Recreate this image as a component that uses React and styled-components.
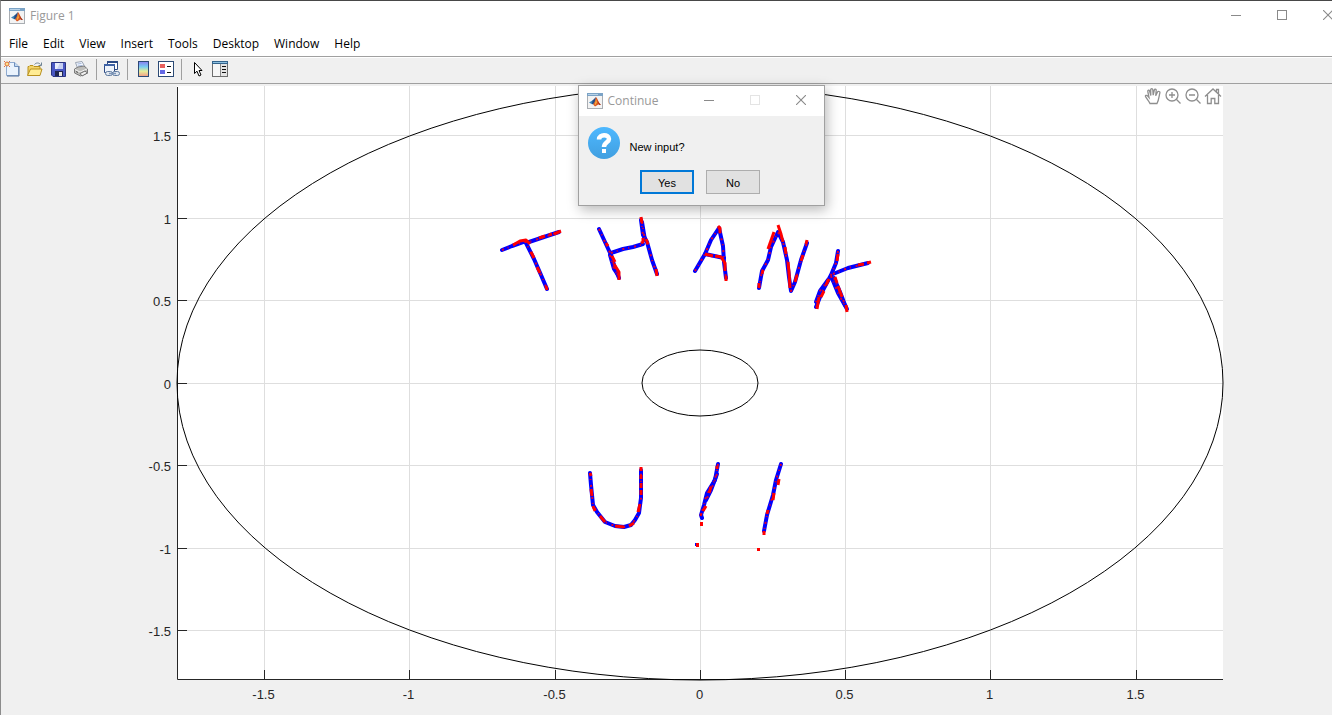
import React from 'react';
import styled, { createGlobalStyle } from 'styled-components';

const GlobalStyle = createGlobalStyle`
  *, *::before, *::after { box-sizing: border-box; }
  html, body { margin: 0; background: #f0f0f0; }
  html { overflow: hidden; }
  button { font: inherit; color: inherit; background: none; border: 0; padding: 0; margin: 0; }
  svg { display: block; }
`;

const Window = styled.div`
  position: relative;
  min-height: 100vh;
  overflow: hidden;
  border-top: 1px solid #484848;
  border-left: 1px solid #8c8c8c;
  font-family: "Open Sans", "Noto Sans", sans-serif;
  font-size: 12px;
  color: #000;
  background: #f0f0f0;
`;

const TitleBar = styled.header`
  display: flex;
  align-items: center;
  height: ${(p) => (p.$dialog ? '30px' : '29px')};
  padding-left: 8px;
  background: #fff;
  color: #999;
`;

const Title = styled.span`
  flex: 1;
  margin-left: 5px;
  line-height: 16px;
  white-space: nowrap;
`;

const Controls = styled.div`
  display: flex;
  align-self: flex-start;
  margin-right: ${(p) => (p.$clipped ? '-19px' : '0')};
`;

const ControlButton = styled.button`
  display: flex;
  align-items: center;
  justify-content: center;
  width: 46px;
  height: 28px;
  color: ${(p) => (p.disabled ? '#e4e4e4' : '#8a8a8a')};
`;

const MenuBar = styled.nav`
  display: flex;
  gap: 1px;
  height: 26px;
  padding-left: 1px;
  background: #fff;
`;

const MenuItem = styled.button`
  padding: 2px 7px 0;
  line-height: 24px;
`;

const ToolBar = styled.div`
  display: flex;
  align-items: center;
  height: 28px;
  padding-bottom: 2px;
  border-top: 1px solid #a0a0a0;
  border-bottom: 1px solid #a0a0a0;
  box-shadow: inset 0 1px 0 #fff;
  background: #f0f0f0;
`;

const ToolButton = styled.button`
  display: flex;
  width: 23px;
  padding-left: 3px;
`;

const Separator = styled.span`
  width: 1px;
  height: 21px;
  margin: 0 4px 0 3px;
  background: #a0a0a0;
`;

const Figure = styled.main`
  position: relative;
`;

const Chart = styled.svg`
  width: 100%;
  height: auto;
  font-family: "Liberation Sans", Arial, sans-serif;
  font-size: 13px;
`;

const AxesTools = styled.div`
  position: absolute;
  top: 3px;
  right: 109px;
  display: flex;
`;

const AxesButton = styled.button`
  display: flex;
  justify-content: center;
  width: 20px;
  color: #8e8e8e;
`;

const Dialog = styled.section`
  position: absolute;
  top: 1px;
  left: calc(50% - 89px);
  width: 247px;
  border: 1px solid #a0a0a0;
  background: #f0f0f0;
  box-shadow: 2px 4px 12px rgba(0, 0, 0, 0.28);
`;

const DialogBody = styled.div`
  display: flex;
  align-items: center;
  padding: 11px 9px;
  gap: 10px;
  font: 11px/16px "Liberation Sans", Arial, sans-serif;
`;

const Message = styled.p`
  margin: 8px 0 0;
`;

const DialogActions = styled.div`
  display: flex;
  justify-content: center;
  gap: 12px;
  padding: 0 2px 11px 0;
  font: 11px/16px "Liberation Sans", Arial, sans-serif;
`;

const PushButton = styled.button`
  width: 54px;
  height: 24px;
  padding-top: 2px;
  border: ${(p) => (p.$primary ? '2px solid #0078d7' : '1px solid #adadad')};
  background: #e1e1e1;
`;

const MatlabIcon = () => (
  <svg width="16" height="16" viewBox="0 0 16 16" aria-hidden="true">
    <rect x="0.5" y="0.5" width="15" height="15" fill="#f3f3f3" stroke="#a9adb2" />
    <path d="M0 0h16v3H0z" fill="#7ba3c6" />
    <path d="M1 1h10v1H1z" fill="#b9d3e8" />
    <path d="M2 9.5 5.5 7.5 8 9 5.5 11.5z" fill="#3c83b8" />
    <path d="M5.5 7.5 9 4 8.5 8 6.5 11 5 11z" fill="#234b84" />
    <path d="M9 4c1.600 1.500 2.500 5.500 5 8-1.500-.4-2.500-.6-3.500 0L8 13.500 6 11.200c1.500-.7 2.300-4 3-7.200z" fill="#d9541e" />
    <path d="M9.200 6 10 9.500 8.500 12 7.500 11.500z" fill="#f3a53b" />
    <path d="M10 6c1 2.500 2 4.500 4 6l-2-.3z" fill="#8e2418" />
  </svg>
);

const MinimizeIcon = () => (
  <svg width="10" height="10" viewBox="0 0 10 10" aria-hidden="true"><path d="M0 5.500h10" stroke="currentColor" /></svg>
);
const MaximizeIcon = () => (
  <svg width="10" height="10" viewBox="0 0 10 10" aria-hidden="true"><rect x="0.5" y="0.5" width="9" height="9" fill="none" stroke="currentColor" /></svg>
);
const CloseIcon = () => (
  <svg width="10" height="10" viewBox="0 0 10 10" aria-hidden="true"><path d="M0 0 10 10M10 0 0 10" stroke="currentColor" strokeWidth="1.100" /></svg>
);

const ToolIcon = ({ children }) => (
  <svg width="16" height="16" viewBox="0 0 16 16" aria-hidden="true">{children}</svg>
);

const NewIcon = () => (
  <ToolIcon>
    <path d="M2.500 1.500h8l4 3.500v9.500h-12z" fill="#eaf3fd" stroke="#8fabd0" />
    <path d="M10.500 1.500v4h4" fill="#c2d8f0" stroke="#6d8fbd" />
    <path d="M3 15h12V5" fill="none" stroke="#4f6f9c" />
    <circle cx="3" cy="3" r="2" fill="#ffe08a" stroke="#e0703a" />
    <path d="M0 0l1 1M5 5l1 1M6 0 5 1M1 5 0 6" stroke="#e0703a" />
  </ToolIcon>
);
const OpenIcon = () => (
  <ToolIcon>
    <path d="M1 14V5.500h1l1-1h3l1 1h6V8" fill="#f3d469" stroke="#b8901f" />
    <path d="M.5 14.500 3.500 8h11.500l-2 6.500z" fill="#ffec94" stroke="#b8901f" />
    <path d="M7.500 3.500C9 1.500 12 1.500 13.500 3.500M14.500 1.500v3h-3" fill="none" stroke="#6f8494" />
  </ToolIcon>
);
const SaveIcon = () => (
  <ToolIcon>
    <path d="M1.500 1.500h14v14H3l-1.500-1.500z" fill="#4a58c4" stroke="#2b3480" />
    <path d="M5 2h8v6H5z" fill="#e9edfb" />
    <path d="M10 2h3v6H7z" fill="#c6cff2" />
    <path d="M5 10h8v5H5z" fill="#20264f" />
    <path d="M9 11h3v4H9z" fill="#e6e6e6" />
  </ToolIcon>
);
const PrintIcon = () => (
  <ToolIcon>
    <path d="M4.500 7 2.500 1.500 9 .5 12 6z" fill="#f3f7fd" stroke="#9aa4b3" />
    <path d="M4.500 3l4-.6M5 5l4.500-.6" stroke="#a9bce0" />
    <path d="M1.500 8 5 6l6-1 3.500 3v4l-7 3-6-3z" fill="#bdbdba" stroke="#7a7a7a" />
    <path d="M2 8.500 7 11l7-3" fill="none" stroke="#f4f4f4" />
    <path d="M7 12.500l5-2.500 2.500 2-5.500 3z" fill="#efefef" stroke="#6b6b6b" />
    <path d="M3 10.500l2 1" stroke="#555" />
  </ToolIcon>
);
const LinkIcon = () => (
  <ToolIcon>
    <path d="M3.500.5h10v8h-10z" fill="#fff" stroke="#2c4a85" />
    <path d="M3 0h11v2H3z" fill="#2c4a85" />
    <path d="M.5 3.500h10v8h-10z" fill="#eef3fb" stroke="#2c4a85" />
    <path d="M0 3h11v2H0z" fill="#3d62a6" />
    <rect x="1.500" y="10.500" width="7" height="4" rx="2" fill="#dfe6ef" stroke="#5f7a9f" />
    <rect x="8.500" y="10.500" width="7" height="4" rx="2" fill="#dfe6ef" stroke="#5f7a9f" />
    <path d="M5 12.500h7" stroke="#7f97b9" strokeWidth="1.500" />
  </ToolIcon>
);
const ColorbarIcon = () => (
  <ToolIcon>
    <defs>
      <linearGradient id="colorbar" x1="0" y1="0" x2="0" y2="1">
        <stop offset="0" stopColor="#8a7df0" />
        <stop offset="0.350" stopColor="#78cdf2" />
        <stop offset="0.650" stopColor="#e6ee9a" />
        <stop offset="1" stopColor="#f49a86" />
      </linearGradient>
    </defs>
    <rect x="3.500" y="0.500" width="10" height="15" fill="url(#colorbar)" stroke="#2c4a75" />
  </ToolIcon>
);
const LegendIcon = () => (
  <ToolIcon>
    <rect x="0.500" y="0.500" width="15" height="15" fill="#fff" stroke="#2c4a75" />
    <rect x="2" y="3" width="5" height="4" fill="#e8605c" />
    <rect x="2" y="9" width="5" height="4" fill="#6468e4" />
    <path d="M9 5.500h4M9 11.500h4" stroke="#111" />
  </ToolIcon>
);
const CursorIcon = () => (
  <ToolIcon>
    <path d="M5.500 1.500v11l2.500-2.300 2 4.800 2-1-2-4.500h3z" fill="#fff" stroke="#000" />
  </ToolIcon>
);
const InspectorIcon = () => (
  <ToolIcon>
    <rect x="0.500" y="0.500" width="15" height="15" fill="#f6f6f6" stroke="#6d6d6d" />
    <path d="M0 0h16v3H0z" fill="#35648c" />
    <path d="M1 1h14v1H1z" fill="#8cc0e0" />
    <path d="M9 3h6v12H9z" fill="#e4e4e4" />
    <path d="M8.500 3v12" stroke="#888" />
    <path d="M10 5.500h4M10 8.500h4M10 11.500h4" stroke="#111" />
  </ToolIcon>
);

const LineIcon = ({ children }) => (
  <svg width="18" height="18" viewBox="0 0 18 18" fill="none" stroke="currentColor" strokeWidth="1.300" aria-hidden="true">{children}</svg>
);
const PanIcon = () => (
  <LineIcon>
    <path d="M6 16.500C5 14 2.500 11.500 1.500 9.500 1 8.500 2.500 7.800 3.500 8.800L5 10.500 3.800 4.500C3.500 3 5.200 2.800 5.600 4L6.800 8.500 6.700 2.700c0-1.500 2-1.500 2.100 0L9.200 8.200 10.300 3c.3-1.300 2-1 1.900.3L11.700 8.800 13.500 5c.6-1.100 2.800-.5 2.400.8C15 9 15 13 13 16.500z" />
  </LineIcon>
);
const ZoomInIcon = () => (
  <LineIcon><circle cx="8" cy="8" r="6" /><path d="M12.300 12.300 16.500 16.500M8 5v6M5 8h6" /></LineIcon>
);
const ZoomOutIcon = () => (
  <LineIcon><circle cx="8" cy="8" r="6" /><path d="M12.300 12.300 16.500 16.500M5 8h6" /></LineIcon>
);
const HomeIcon = () => (
  <LineIcon><path d="M1 9.500 9 2l8 7.500M3.500 8v8.500h3.700v-5h3.600v5h3.700V8M12.500 5V2.500h2V7" /></LineIcon>
);

const QuestionIcon = () => (
  <svg width="32" height="32" viewBox="0 0 32 32" aria-hidden="true">
    <defs>
      <linearGradient id="question" x1="0" y1="0" x2="0" y2="1">
        <stop offset="0" stopColor="#4db8ff" />
        <stop offset="1" stopColor="#419fe0" />
      </linearGradient>
    </defs>
    <circle cx="16" cy="16" r="16" fill="url(#question)" />
    <path d="M11 12.500C11 7 21 7 21 12 21 15.500 16 15 16 20" fill="none" stroke="#fff" strokeWidth="4.500" />
    <rect x="14" y="22" width="4" height="4" fill="#fff" />
  </svg>
);

const xTicks = [[264.5, '-1.5'], [409.5, '-1'], [555.5, '-0.5'], [700.5, '0'], [845.5, '0.5'], [990.5, '1'], [1136.5, '1.5']];
const yTicks = [[135.5, '1.5'], [218.5, '1'], [300.5, '0.5'], [383.5, '0'], [465.5, '-0.5'], [548.5, '-1'], [630.5, '-1.5']];

const blueTraces = [
  '502,250 512,246 523,242 529,242 541,238 559,232',
  '525,241 534,259 541,275 547,289',
  '599,229 605,242 611,255 615,268 619,278',
  '610,255 614,269 618,275',
  '611,253 623,249 633,247 643,244',
  '641,220 643,235 647,242 652,260 657,274',
  '642,222 645,240',
  '695,271 705,254 711,240 719,228 723,246 724,262 726,278',
  '705,254 724,258',
  '759,288 762,271 768,260 771,247 778,232 783,242 787,260 789,277 791,291 795,282 801,260 807,243',
  '838,251 836,263 831,275 822,292 816,307',
  '828,280 820,291 816,302',
  '833,274 848,268 868,263',
  '831,276 838,293 847,309',
  '834,278 840,292 845,305',
  '590,473 591,485 593,505 597,512 605,522 615,526 624,527 631,525 635,520 639,513 641,498 641,470',
  '718,464 715,480 707,493 704,505 701,515 702,518',
  '717,474 711,490 706,500',
  '781,464 776,480 773,495 767,515 764,531',
];
const redRuns = [
  '513,245 520,241 526,240 530,244', '539,238 545,236', '549,235 552,234', '554,234 561,231',
  '531,252 534,258', '537,267 540,273', '546,286 547,290',
  '612,256 615,262', '614,264 619,272 619,280', '606,243 608,246', '641,243 643,242 643,238', '641,217 642,223',
  '656,269 657,276', '646,239 648,244',
  '718,226 720,228 720,233', '705,254 713,256', '715,256 721,257 725,263 725,271', '726,276 726,281',
  '768,249 774,232', '778,225 781,234 783,242', '785,247 786,254', '788,262 789,272 790,288', '795,282 797,275',
  '801,261 803,255', '806,244 807,240', '759,283 759,288', '762,274 763,270',
  '829,279 826,285', '824,291 821,297', '819,297 817,309', '835,277 837,283', '838,286 842,297', '846,305 847,312',
  '858,265 864,264', '867,263 871,262', '838,254 837,261',
  '590,473 591,476', '591,489 592,496', '593,506 595,511', '600,516 605,522', '615,526 624,527', '629,526 634,523',
  '638,512 640,504', '641,467 641,471', '641,475 641,479', '641,483 641,488', '641,490 641,495',
  '717,466 717,469', '711,487 709,493', '706,506 703,511', '700,514 702,515',
  '701.5,522 701.5,526', '697.5,543 697.5,547',
  '779,479 778,485', '774,493 773,500', '768,510 767,514', '764,531 764,535', '758.5,548 758.5,551',
];

const AxisTicks = () => (
  <g>
    {xTicks.map(([x, label]) => (
      <g key={label}>
        <path d={`M${x} 680v-10`} stroke="#262626" />
        <text x={x - 1} y="699" textAnchor="middle" fill="#262626">{label}</text>
      </g>
    ))}
    {yTicks.map(([y, label]) => (
      <g key={label}>
        <path d={`M178 ${y}h9`} stroke="#262626" />
        <text x="171" y={y + 5} textAnchor="end" fill="#262626">{label}</text>
      </g>
    ))}
  </g>
);

const PlotChart = () => (
  <Chart viewBox="1 84 1331 631" role="img" aria-label="Pen input plot">
    <rect x="177" y="86" width="1046" height="594" fill="#fff" />
    <g stroke="#dedede">
      {xTicks.map(([x]) => <path key={x} d={`M${x} 86V680`} />)}
      {yTicks.map(([y]) => <path key={y} d={`M178 ${y}H1223`} />)}
    </g>
    <path d="M177.500 87V679.500H1223" fill="none" stroke="#262626" />
    <AxisTicks />
    <g fill="none" stroke="#000">
      <ellipse cx="700" cy="383" rx="523" ry="297" />
      <ellipse cx="700" cy="383" rx="58" ry="33" />
    </g>
    <g fill="none" strokeLinejoin="round">
      {blueTraces.map((points) => (
        <polyline key={points} points={points} stroke="#0000ff" strokeWidth="4" strokeLinecap="round" />
      ))}
      {blueTraces.map((points) => (
        <polyline key={points} points={points} stroke="#e0002c" strokeWidth="2" strokeDasharray="2 4 1 5" />
      ))}
      {redRuns.map((points) => <polyline key={points} points={points} stroke="#ff0000" strokeWidth="3" />)}
      <path d="M695.500 543v3" stroke="#0000ff" />
    </g>
  </Chart>
);

const WindowControls = ({ clipped, maximizeDisabled }) => (
  <Controls $clipped={clipped}>
    <ControlButton aria-label="Minimize"><MinimizeIcon /></ControlButton>
    <ControlButton aria-label="Maximize" disabled={maximizeDisabled}><MaximizeIcon /></ControlButton>
    <ControlButton aria-label="Close"><CloseIcon /></ControlButton>
  </Controls>
);

const menus = ['File', 'Edit', 'View', 'Insert', 'Tools', 'Desktop', 'Window', 'Help'];
const tools = [
  [['New figure', NewIcon], ['Open', OpenIcon], ['Save', SaveIcon], ['Print', PrintIcon]],
  [['Link plot', LinkIcon]],
  [['Insert colorbar', ColorbarIcon], ['Insert legend', LegendIcon]],
  [['Edit plot', CursorIcon], ['Property inspector', InspectorIcon]],
];
const axesTools = [['Pan', PanIcon], ['Zoom in', ZoomInIcon], ['Zoom out', ZoomOutIcon], ['Restore view', HomeIcon]];

export default function App() {
  return (
    <>
      <GlobalStyle />
      <Window>
        <TitleBar>
          <MatlabIcon />
          <Title>Figure 1</Title>
          <WindowControls clipped />
        </TitleBar>
        <MenuBar>
          {menus.map((name) => <MenuItem key={name}>{name}</MenuItem>)}
        </MenuBar>
        <ToolBar>
          {tools.map((group, i) => (
            <React.Fragment key={i}>
              {i > 0 && <Separator />}
              {group.map(([label, Icon]) => (
                <ToolButton key={label} aria-label={label}><Icon /></ToolButton>
              ))}
            </React.Fragment>
          ))}
        </ToolBar>
        <Figure>
          <PlotChart />
          <AxesTools>
            {axesTools.map(([label, Icon]) => (
              <AxesButton key={label} aria-label={label}><Icon /></AxesButton>
            ))}
          </AxesTools>
          <Dialog role="dialog" aria-label="Continue">
            <TitleBar $dialog>
              <MatlabIcon />
              <Title>Continue</Title>
              <WindowControls maximizeDisabled />
            </TitleBar>
            <DialogBody>
              <QuestionIcon />
              <Message>New input?</Message>
            </DialogBody>
            <DialogActions>
              <PushButton $primary>Yes</PushButton>
              <PushButton>No</PushButton>
            </DialogActions>
          </Dialog>
        </Figure>
      </Window>
    </>
  );
}
